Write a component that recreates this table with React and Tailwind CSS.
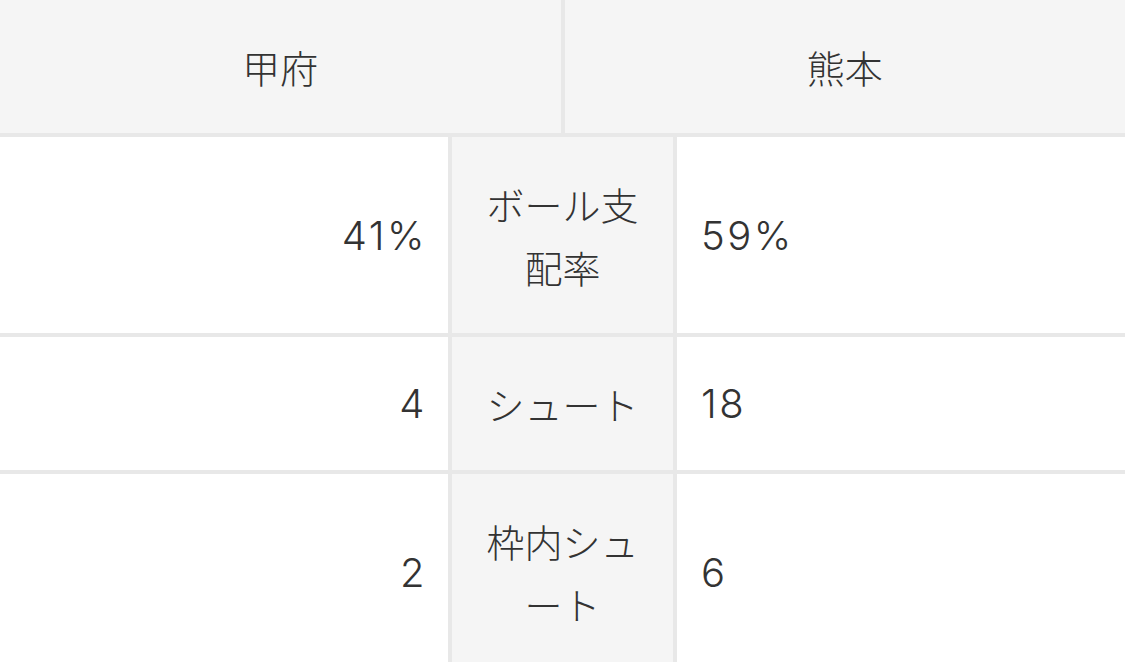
export default function App() {
  const rows = [
    { l: "41%", m: "ボール支配率", r: "59%" },
    { l: "4", m: "シュート", r: "18" },
    { l: "2", m: "枠内シュート", r: "6" },
  ];
  const font = { fontFamily: '"Noto Sans CJK JP", sans-serif' };
  const num = { fontFamily: 'Inter, "Noto Sans CJK JP", sans-serif' };
  return (
    <div className="w-[1125px] h-[662px] overflow-hidden bg-[#e8e8e8] text-[38px] font-light leading-[63px] text-[#333333]" style={font}>
      <div className="grid grid-cols-2 gap-[4px] mb-[4px]">
        <div className="bg-[#f5f5f5] py-[35px] text-center">甲府</div>
        <div className="bg-[#f5f5f5] py-[35px] text-center">熊本</div>
      </div>
      <div className="grid grid-cols-[1fr_221px_1fr] gap-[4px]">
        {rows.map((row, i) => (
          <div key={i} className="contents">
            <div className="bg-white pl-[24px] pr-[21px] py-[35px] flex items-center justify-end text-[40px] tracking-[2.5px]" style={num}>{row.l}</div>
            <div className="bg-[#f5f5f5] px-[24px] py-[35px] flex items-center justify-center text-center">{row.m}</div>
            <div className="bg-white px-[24px] py-[35px] flex items-center justify-start text-[40px] tracking-[2.5px]" style={num}>{row.r}</div>
          </div>
        ))}
      </div>
    </div>
  );
}
